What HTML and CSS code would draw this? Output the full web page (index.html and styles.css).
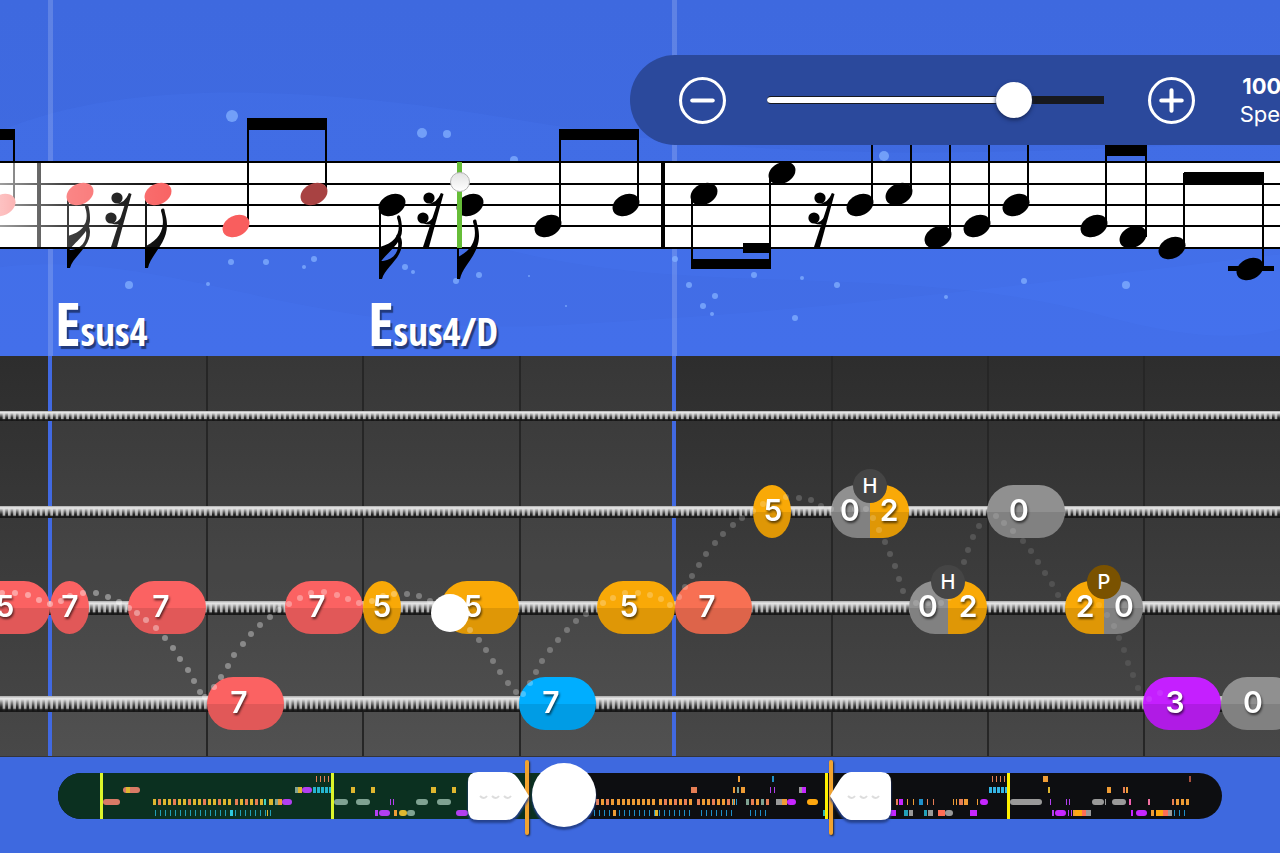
FILE: index.html
```html
<!DOCTYPE html>
<html lang="en">
<head>
<meta charset="utf-8">
<meta name="viewport" content="width=device-width, initial-scale=1">
<title>Bass practice player</title>
<link rel="stylesheet" href="styles.css">
</head>
<body>
<main class="player">
  <section class="score" aria-label="Sheet music">
    <svg class="canvas" aria-hidden="true">
      <defs>
        <linearGradient id="fade"><stop offset="0" stop-color="#fff" stop-opacity=".62"/><stop offset=".35" stop-color="#fff" stop-opacity=".25"/><stop offset="1" stop-color="#fff" stop-opacity="0"/></linearGradient>
        <linearGradient id="knob" x2="0" y2="1"><stop offset="0" stop-color="#e2e2e2"/><stop offset="1" stop-color="#fff"/></linearGradient>
        <ellipse id="head" rx="14.2" ry="10.3" transform="rotate(-27)"/>
        <path id="flag8" d="M-1 0L2 0C5-14 21-24 21-43C21-50 19-54 18.500-58C18-60 15-60 15-57C19-45 18-31 0-22Z"/>
        <path id="flag16" d="M-1 0L2 0C5-12 22-20 22-36C22-41 20-43 18-46L16-43C21-34 18-20 3-18L0-18ZM0-16C6-26 23-36 22-50C22-55 21-60 20-63Q17-65 17-61C21-50 19-37 0-32Z"/>
        <g id="rest"><circle cx="117" cy="198" r="5.600"/><circle cx="111" cy="218" r="5.600"/><path d="M129 193l2.500 1L117 247h-6L125 204Z"/><path d="M117 203q8 0 12-10l-1 11q-5 2-11-1Z"/><path d="M111 223q8 0 12-9l-1 9q-5 3-11 0Z"/></g>
      </defs>
      <path class="wave" d="M-20 140C120 70 340 90 520 120S900 170 1400 130V356H-20Z"/>
      <path class="wave" d="M-20 270C160 240 300 340 560 325S900 300 1400 240V356H-20Z"/>
      <path class="wave" d="M500 248C700 300 900 260 1100 315S1300 300 1400 290V248Z"/>
      <rect class="loop-edge" x="48" width="5" height="356"/><rect class="loop-edge" x="672" width="5" height="356"/>
      <g id="sparks" class="sparks"></g>
      <rect class="paper" y="162" width="100%" height="86"/>
      <g class="ink">
        <rect y="161" width="100%" height="2"/><rect y="183" width="100%" height="2"/><rect y="204" width="100%" height="2"/><rect y="225" width="100%" height="2"/><rect y="247" width="100%" height="2"/>
        <rect x="37" y="162" width="4" height="86"/><rect x="661" y="162" width="4" height="86"/>
        <rect y="129" width="15" height="11"/><rect x="247" y="118" width="80" height="12"/><rect x="559" y="129" width="80" height="11"/>
        <rect x="691" y="259" width="80" height="10"/><rect x="743" y="243" width="28" height="10"/>
        <rect x="1105" y="145" width="42" height="11"/><rect x="1184" y="172" width="80" height="12"/><rect x="1228" y="266" width="46" height="5"/>
        <use href="#rest"/><use href="#rest" x="312"/><use href="#rest" x="703"/>
        <use href="#flag16" x="68" y="268"/><use href="#flag8" x="146" y="268"/><use href="#flag16" x="380" y="279"/><use href="#flag8" x="458" y="279"/>
      </g>
      <g id="notes"></g>
      <rect y="163" width="190" height="84" fill="url(#fade)"/>
      <rect x="457" y="162" width="5" height="86" fill="#66bd38"/>
      <circle cx="460" cy="182" r="9.500" fill="url(#knob)" stroke="#b4b4b4"/>
    </svg>
    <p class="chord chord-a"><span class="root">E</span>sus4</p>
    <p class="chord chord-b"><span class="root">E</span>sus4/D</p>
    <div class="speed">
      <button class="round" aria-label="Slower"><svg viewBox="0 0 46 46"><circle cx="23" cy="23" r="21.500"/><path d="M13 23h20"/></svg></button>
      <input class="slider" type="range" min="0" max="100" value="76" aria-label="Speed">
      <button class="round" aria-label="Faster"><svg viewBox="0 0 46 46"><circle cx="23" cy="23" r="21.500"/><path d="M13 23h20M23 13v20"/></svg></button>
      <div class="readout"><strong>100%</strong><span>Speed</span></div>
    </div>
  </section>

  <section class="tab" aria-label="Tablature">
    <svg class="canvas">
      <defs>
        <linearGradient id="wire" x2="0" y2="1"><stop offset="0" stop-color="#aaa"/><stop offset=".15" stop-color="#e6e6e6"/><stop offset=".4" stop-color="#ccc"/><stop offset=".76" stop-color="#aaa"/><stop offset=".86" stop-color="#222"/><stop offset="1" stop-color="#161616"/></linearGradient>
        <linearGradient id="gap" x2="0" y2="1"><stop offset=".2" stop-color="#222" stop-opacity="0"/><stop offset=".7" stop-color="#161616" stop-opacity=".9"/></linearGradient>
        <pattern id="w1" width="5.300" height="10" y="55" patternUnits="userSpaceOnUse"><rect width="2.600" height="10" fill="url(#gap)"/></pattern>
        <pattern id="w2" width="5.300" height="12" y="150" patternUnits="userSpaceOnUse"><rect width="2.600" height="12" fill="url(#gap)"/></pattern>
        <pattern id="w3" width="5.300" height="14" y="245" patternUnits="userSpaceOnUse"><rect width="2.600" height="14" fill="url(#gap)"/></pattern>
        <pattern id="w4" width="5.300" height="16" y="340" patternUnits="userSpaceOnUse"><rect width="2.600" height="16" fill="url(#gap)"/></pattern>
      </defs>
      <rect x="50" width="624" height="100%" fill="#fff" fill-opacity=".05"/>
      <g class="fret"><rect x="206" width="2" height="100%"/><rect x="362" width="2" height="100%"/><rect x="519" width="2" height="100%"/><rect x="831" width="2" height="100%"/><rect x="987" width="2" height="100%"/><rect x="1143" width="2" height="100%"/></g>
      <rect x="48" width="4" height="100%" fill="#4169e1"/><rect x="672" width="4" height="100%" fill="#4169e1"/>
      <g fill="url(#wire)"><rect y="55" width="100%" height="10"/><rect y="150" width="100%" height="12"/><rect y="245" width="100%" height="14"/><rect y="340" width="100%" height="16"/></g>
      <rect y="55" width="100%" height="10" fill="url(#w1)"/><rect y="150" width="100%" height="12" fill="url(#w2)"/><rect y="245" width="100%" height="14" fill="url(#w3)"/><rect y="340" width="100%" height="16" fill="url(#w4)"/>
      <g id="pills"></g>
      <g id="trail"></g>
      <g id="digits"></g>
      <circle cx="450" cy="257" r="19" fill="#fff"/>
    </svg>
  </section>

  <footer class="overview">
    <div class="track">
      <svg class="map" viewBox="58 0 1164 46" preserveAspectRatio="none" aria-hidden="true">
        <rect x="58" width="1164" height="46" fill="#0d0e11"/><rect x="58" width="506" height="46" fill="#0b3020"/>
        <g id="marks"></g>
      </svg>
      <button class="grip grip-start" aria-label="Loop start"><svg viewBox="0 0 61 50"><path d="M10 1H38C48 1 50 7 61 25C50 42 48 49 38 49H10Q0 49 0 39V11Q0 1 10 1Z"/><path class="dimples" d="M12 25q4 4 7 0M24 25q4 4 7 0M36 25q4 4 7 0"/></svg></button>
      <button class="grip grip-end" aria-label="Loop end"><svg viewBox="0 0 61 50"><path d="M51 1H23C13 1 11 7 0 25C11 42 13 49 23 49H51Q61 49 61 39V11Q61 1 51 1Z"/><path class="dimples" d="M18 25q4 4 7 0M30 25q4 4 7 0M42 25q4 4 7 0"/></svg></button>
      <button class="playhead" aria-label="Position"></button>
    </div>
  </footer>
</main>
<script src="player.js"></script>
</body>
</html>
```
FILE: styles.css
```css
* { box-sizing: border-box; }
html, body { height: 100%; margin: 0; }
body { background: #3e69df; color: #fff; font-family: Inter, "Liberation Sans", sans-serif; overflow: hidden; }
button { padding: 0; border: 0; background: none; cursor: pointer; }
.player { display: flex; flex-direction: column; min-height: 100%; }
.canvas { display: block; width: 100%; height: 100%; }

.score { position: relative; height: 356px; background: linear-gradient(#3e69df, #406be3); }
.wave { fill: #5080ff; fill-opacity: .14; }
.loop-edge { fill: #fff; fill-opacity: .17; }
.sparks { fill: #83b0ff; fill-opacity: .75; }
.paper { fill: #fff; }
.ink, .note { fill: #000; }
.played { fill: #f95e5e; }
.current { fill: #a84242; }

.chord { position: absolute; top: 291px; margin: 0; font: bold 39px/64px "Liberation Sans Narrow", "Open Sans Condensed", "Liberation Sans", sans-serif; text-shadow: 2px 3px 1px #223a7c; white-space: nowrap; }
.chord .root { font-size: 60px; }
.chord-a { left: 55px; }
.chord-b { left: 368px; }

.speed { position: absolute; top: 55px; right: 0; width: 650px; height: 90px; padding-left: 49px; display: flex; align-items: center; background: #2b499c; border-radius: 45px 0 0 45px; overflow: hidden; }
.round { flex: none; width: 47px; height: 47px; }
.round svg { display: block; width: 100%; fill: none; stroke: #fff; stroke-width: 3; stroke-linecap: round; }
.round path { stroke-width: 4; }
.slider { flex: 1; min-width: 0; margin: 0 44px 0 41px; height: 36px; appearance: none; background: none; }
.slider::-webkit-slider-runnable-track { height: 8px; border: solid #17191f; border-width: 1px 0; border-radius: 4px 0 0 4px; background: linear-gradient(90deg, #fff 73%, #17191f 73%); }
.slider::-webkit-slider-thumb { appearance: none; width: 36px; height: 36px; margin-top: -15px; border-radius: 50%; background: #fff; box-shadow: 0 2px 4px #17285a; }
.readout { flex: none; width: 66px; margin: 0 -26px 0 45px; display: flex; flex-direction: column; align-items: center; font-size: 22px; line-height: 28px; }

.tab { height: 401px; background: linear-gradient(#2d2d2d, #484848); border-bottom: 1px solid #33343a; }
.fret { fill: #262626; }
.dot { fill: #fff; }
.fingering { font-weight: 600; font-size: 30px; text-anchor: middle; fill: #fff; filter: drop-shadow(1px 2px 1px rgba(0, 0, 0, .6)); }
.technique { font-size: 20px; font-weight: 500; text-anchor: middle; fill: #fff; }

.overview { flex: 1; padding: 16px 58px 34px; background: #3e69df; }
.track { position: relative; height: 46px; }
.map { display: block; width: 100%; height: 100%; border-radius: 23px; }
.grip { position: absolute; top: -2px; width: 61px; height: 50px; }
.grip svg { position: relative; display: block; width: 61px; height: 50px; overflow: visible; fill: #fff; filter: drop-shadow(0 3px 1px #25428f); }
.grip .dimples { fill: none; stroke: #ddd; stroke-width: 2; }
.grip::before { content: ""; position: absolute; top: -11px; width: 4px; height: 75px; background: #f2a32f; border-radius: 2px; box-shadow: 1px 1px 2px #222; }
.grip-start { left: 40.4%; margin-left: -60px; }
.grip-start::before { right: 0; }
.grip-end { left: 66.4%; margin-left: -1px; }
.grip-end::before { left: -1px; }
.playhead { position: absolute; left: 43.4%; top: -10px; width: 64px; height: 64px; margin-left: -31px; border-radius: 50%; background: #fff; box-shadow: 0 3px 2px #25428f; }
```
FILE: player.js
```js
const NS = "http://www.w3.org/2000/svg";
function add(parent, tag, attrs, text) {
  const el = document.createElementNS(NS, tag);
  for (const k in attrs) el.setAttribute(k, attrs[k]);
  if (text !== undefined) el.textContent = text;
  parent.appendChild(el);
  return el;
}
const byId = id => document.getElementById(id);

// Note heads: x, y, stem x, stem end y, state
[
  [2, 205, 14, 130, "played"], [80, 194, 68, 268, "played"], [158, 194, 146, 268, "played"],
  [236, 226, 248, 119, "played"], [314, 194, 326, 119, "current"], [392, 205, 380, 279, "note"],
  [470, 205, 458, 279, "note"], [548, 226, 560, 130, "note"], [626, 205, 638, 130, "note"],
  [704, 194, 692, 269, "note"], [782, 173, 770, 269, "note"], [860, 205, 872, 120, "note"],
  [899, 194, 911, 120, "note"], [938, 237, 950, 120, "note"], [977, 226, 989, 120, "note"],
  [1016, 205, 1028, 120, "note"], [1094, 226, 1106, 146, "note"], [1133, 237, 1146, 146, "note"],
  [1172, 248, 1184, 173, "note"], [1250, 269, 1263, 173, "note"]
].forEach(([x, y, sx, sy, state]) => {
  add(byId("notes"), "path", { d: `M${sx} ${y}V${sy}`, stroke: "#000", "stroke-width": 2 });
  add(byId("notes"), "use", { href: "#head", x, y, class: state });
});

[
  [232, 116, 6], [422, 133, 5], [447, 134, 4], [514, 160, 4], [884, 156, 5], [129, 285, 4], [231, 262, 3],
  [266, 262, 3], [304, 267, 2], [314, 259, 3], [208, 284, 2], [405, 267, 3], [413, 272, 2], [479, 275, 3],
  [456, 281, 3], [529, 276, 1], [566, 306, 1], [675, 259, 3], [689, 285, 3], [715, 296, 3], [703, 306, 3],
  [712, 314, 2], [754, 275, 3], [802, 278, 2], [837, 285, 3], [795, 318, 3], [946, 297, 2], [1024, 281, 3],
  [1126, 285, 4]
].forEach(([cx, cy, r]) => add(byId("sparks"), "circle", { cx, cy, r }));

const RED = "#fb6262", ORANGE = "#f9a907", GREY = "#909090", BLUE = "#00aeff", PURPLE = "#c51fff", CORAL = "#f77053";
const STRING = { 2: 155, 3: 251, 4: 347 };

// Fretted notes: string, start x, width, fills, [digit, x] list, technique
[
  [3, -28, 78, [RED], [["5", 5]]], [3, 50, 39, [RED], [["7", 70]]], [3, 128, 78, [RED], [["7", 161]]],
  [3, 285, 78, [RED], [["7", 317]]], [3, 363, 38, [ORANGE], [["5", 382]]], [3, 441, 78, [ORANGE], [["5", 473]]],
  [3, 597, 78, [ORANGE], [["5", 629]]], [3, 675, 77, [CORAL], [["7", 707]]],
  [3, 909, 78, [GREY, ORANGE], [["0", 928], ["2", 968]], "H"],
  [3, 1065, 78, [ORANGE, GREY], [["2", 1085], ["0", 1124]], "P"],
  [2, 753, 38, [ORANGE], [["5", 773]]], [2, 831, 78, [GREY, ORANGE], [["0", 850], ["2", 889]], "H"],
  [2, 987, 78, [GREY], [["0", 1019]]], [4, 207, 77, [RED], [["7", 239]]], [4, 519, 77, [BLUE], [["7", 551]]],
  [4, 1143, 78, [PURPLE], [["3", 1175]]], [4, 1221, 78, [GREY], [["0", 1253]]]
].forEach(([s, x, w, fills, digits, tech], i) => {
  const y = STRING[s] - 26, h = 53, layer = byId("pills");
  const clip = add(layer, "clipPath", { id: "pill" + i });
  add(clip, "rect", { x, y, width: w, height: h, rx: Math.min(26, w / 2), ry: 27 });
  const g = add(layer, "g", { "clip-path": `url(#pill${i})` });
  fills.forEach((fill, n) => add(g, "rect", { x: x + n * w / fills.length, y, width: w / fills.length, height: h, fill }));
  add(g, "rect", { x, y: y + 27, width: w, height: 27, fill: "#000", "fill-opacity": .1 });
  digits.forEach(([d, dx]) => add(byId("digits"), "text", { x: dx, y: y + 36, class: "fingering" }, d));
  if (tech) {
    add(byId("digits"), "circle", { cx: x + 39, cy: y + 1, r: 17, fill: tech === "P" ? "#7a5200" : "#454545" });
    add(byId("digits"), "text", { x: x + 39, y: y + 8, class: "technique" }, tech);
  }
});

// Bouncing-ball trail, fading with distance
[
  2,237, 15,237, 28,239, 39,244, 50,248, 61,245, 70,240, 83,237, 96,237, 108,241, 119,246, 129,252, 137,257,
  146,264, 156,272, 165,282, 173,292, 180,303, 188,314, 194,325, 200,336, 205,341, 214,331, 221,321, 228,310,
  234,299, 243,288, 251,278, 260,269, 270,261, 279,254, 289,248, 300,242, 311,237, 324,236, 337,239, 348,243,
  359,247, 372,245, 383,240, 394,238, 407,238, 419,240, 430,245, 470,274, 479,284, 486,294, 493,305, 500,316,
  508,327, 516,336, 523,338, 530,327, 536,316, 542,305, 550,294, 558,284, 567,274, 576,265, 586,258, 603,247,
  613,242, 625,237, 638,237, 650,239, 661,243, 670,249, 679,241, 685,231, 692,220, 699,209, 706,198, 715,187,
  723,178, 733,169, 742,162, 753,155, 763,148, 786,141, 799,142, 811,144, 821,150, 831,153, 843,153, 855,153,
  866,153, 873,162, 879,174, 885,186, 890,198, 895,210, 899,223, 903,235, 916,247, 928,247, 941,247, 949,242,
  954,230, 959,218, 964,206, 968,194, 973,181, 979,170, 996,160, 1004,167, 1013,175, 1023,185, 1031,195,
  1038,206, 1045,217, 1052,228, 1058,239, 1099,249, 1107,259, 1114,270, 1119,282, 1124,294, 1128,307,
  1133,319, 1138,332, 1149,343, 1160,337
].forEach((cx, i, a) => {
  if (i % 2 === 0) add(byId("trail"), "circle", { cx, cy: a[i + 1], r: 3, class: "dot", "fill-opacity": (.42 - cx * .00029).toFixed(2) });
});

// Overview marks: row, start, end, period (0 = solid), mark width, colours
const O = "#ef9c35", Y = "#dfb72f", C = "#e67e55", T = "#22a0b8", P = "#b23ff0", S = "#7fa292", G = "#999", B = "#1f8fc9";
[
  [2, 103, 120, 0, 0, ["#d97a66"]], [1, 123, 140, 0, 0, ["#d97a66"]], [1, 126, 130, 0, 0, [Y]],
  [2, 153, 231, 5, 3, [Y, C, Y]], [2, 235, 262, 5, 3, [C, Y]], [3, 155, 274, 5, 1, [T]], [3, 230, 233, 0, 0, ["#30c8e0"]],
  [2, 264, 266, 0, 0, ["#40d0c0"]], [2, 269, 273, 0, 0, [Y]], [2, 275, 278, 0, 0, [S]], [2, 278, 282, 0, 0, [O]],
  [2, 282, 292, 0, 0, [P]], [3, 267, 268, 0, 0, [Y]], [1, 295, 298, 0, 0, [S]], [1, 298, 302, 0, 0, [Y]], [1, 302, 312, 0, 0, [P]],
  [1, 313, 332, 4, 3, ["#26b5d0"]], [0, 316, 330, 4, 1, [C]],
  [2, 334, 348, 0, 0, [S]], [1, 351, 355, 0, 0, [Y]], [2, 356, 370, 0, 0, [S]], [1, 371, 375, 0, 0, [Y]],
  [3, 375, 378, 0, 0, [P]], [3, 379, 390, 0, 0, [P]], [2, 390, 394, 3, 1, [P]], [3, 394, 397, 0, 0, [O]], [3, 399, 407, 0, 0, [Y]], [3, 407, 415, 0, 0, [S]],
  [2, 416, 428, 0, 0, [S]], [1, 431, 436, 0, 0, [Y]], [2, 437, 451, 0, 0, [S]], [1, 452, 456, 0, 0, [Y]], [3, 456, 468, 0, 0, [P]],
  [2, 596, 613, 5, 3, [C, O]], [2, 617, 654, 5, 3, [O]], [2, 659, 691, 5, 3, [O, C]], [2, 697, 733, 5, 3, [C, O, O]], [3, 594, 690, 5, 1, [B]],
  [3, 613, 616, 0, 0, [O]], [3, 655, 658, 0, 0, [Y]], [3, 701, 732, 5, 1, [B]], [2, 733, 737, 3, 1, [B]],
  [1, 691, 697, 0, 0, [C]], [1, 733, 739, 4, 2, [O, S]], [0, 738, 740, 0, 0, [O]], [1, 741, 745, 0, 0, [O]],
  [2, 746, 770, 5, 3, [S, C, O]], [3, 750, 768, 5, 1, [B]], [0, 772, 774, 0, 0, [B]], [1, 770, 776, 4, 1, [P]],
  [2, 776, 782, 0, 0, [G]], [2, 782, 787, 0, 0, [O]], [2, 787, 796, 0, 0, ["#c626ff"]], [1, 799, 802, 0, 0, [G]], [1, 802, 806, 0, 0, ["#c626ff"]],
  [2, 807, 818, 0, 0, ["#ffa80f"]], [3, 823, 828, 0, 0, ["#30b5b5"]],
  [3, 890, 896, 0, 0, ["#c626ff"]], [2, 896, 898, 0, 0, [C]], [2, 899, 903, 0, 0, ["#c626ff"]], [3, 904, 908, 0, 0, [T]], [3, 909, 913, 0, 0, [G]],
  [2, 907, 917, 6, 1, [O]], [2, 919, 923, 0, 0, [B]], [2, 927, 936, 6, 1, [C]], [3, 924, 927, 0, 0, [T]], [3, 928, 933, 0, 0, [G]],
  [3, 938, 945, 0, 0, ["#ff6d55"]], [3, 945, 953, 0, 0, [G]], [2, 953, 958, 3, 1, [O]], [2, 959, 968, 5, 4, [C, O]], [3, 970, 977, 0, 0, ["#c626ff"]],
  [2, 977, 978, 0, 0, [O]], [2, 980, 988, 0, 0, ["#c626ff"]], [1, 989, 1008, 4, 3, ["#35b5e5"]], [0, 992, 1005, 4, 1, [C]],
  [2, 1010, 1042, 0, 0, [G]], [0, 1043, 1048, 0, 0, [O]], [1, 1048, 1050, 0, 0, [Y]], [2, 1050, 1051, 0, 0, [P]],
  [3, 1052, 1054, 0, 0, [P]], [3, 1055, 1066, 0, 0, ["#c626ff"]], [2, 1066, 1071, 3, 1, [P]], [3, 1068, 1072, 3, 1, [P]], [3, 1073, 1075, 0, 0, [O]],
  [3, 1075, 1082, 0, 0, ["#ffa80f"]], [3, 1082, 1086, 0, 0, ["#ff6d55"]], [3, 1086, 1091, 0, 0, [G]], [2, 1092, 1104, 0, 0, [G]], [2, 1105, 1106, 0, 0, [G]],
  [1, 1107, 1111, 0, 0, [O]], [2, 1112, 1126, 0, 0, [G]], [1, 1123, 1128, 3, 2, [C, O]], [2, 1129, 1131, 0, 0, ["#f060b0"]],
  [3, 1131, 1133, 0, 0, ["#c626ff"]], [3, 1136, 1147, 0, 0, ["#c626ff"]], [2, 1148, 1150, 0, 0, ["#f070a0"]], [3, 1151, 1154, 0, 0, [O]],
  [3, 1156, 1163, 0, 0, ["#ffa80f"]], [3, 1163, 1168, 0, 0, ["#ff6d55"]], [3, 1168, 1172, 0, 0, [G]], [3, 1174, 1187, 5, 1, [B]],
  [2, 1172, 1174, 0, 0, [C]], [2, 1176, 1189, 5, 3, [O]], [0, 1189, 1191, 0, 0, ["#a8503c"]]
].forEach(([row, from, to, step, width, colours]) => {
  const y = [3, 14, 26, 37][row];
  if (!step) {
    add(byId("marks"), "rect", { x: from, y, width: to - from, height: 6, rx: to - from > 7 ? 3 : 0, fill: colours[0] });
    return;
  }
  for (let x = from, n = 0; x < to; x += step, n++)
    add(byId("marks"), "rect", { x, y, width, height: 6, fill: colours[n % colours.length] });
});
[100, 331, 825, 1007].forEach(x => add(byId("marks"), "rect", { x, y: 0, width: 3, height: 46, fill: x < 500 ? "#dcf52a" : "#fff000" }));
```
